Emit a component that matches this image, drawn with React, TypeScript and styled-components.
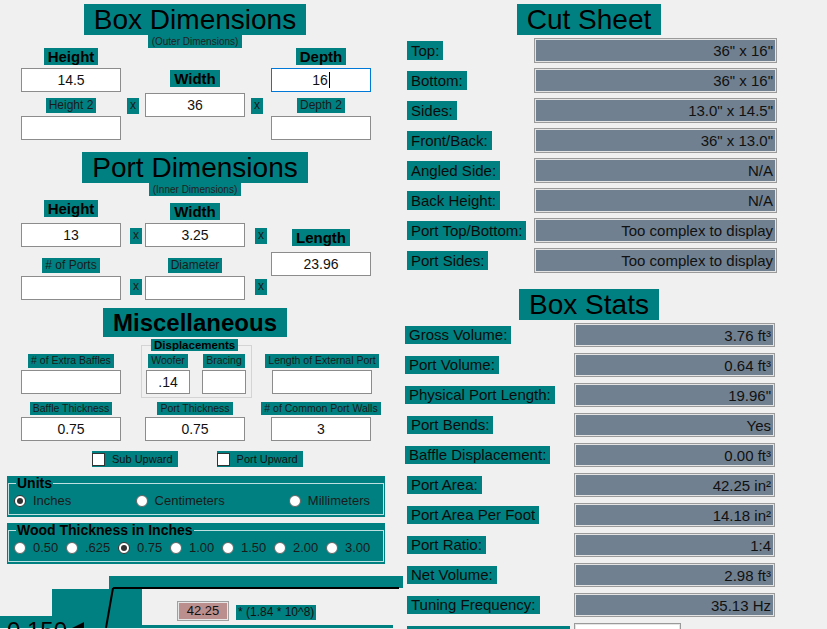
import styled, { createGlobalStyle } from 'styled-components'

const teal = '#008080'
const slate = '#708090'

const GlobalStyle = createGlobalStyle`
  html, body {
    margin: 0;
    padding: 0;
    background: #f0f0f0;
  }
  body {
    font-family: "Liberation Sans", Arial, sans-serif;
    color: #000;
  }
`

const Window = styled.div`
  width: 827px;
  height: 629px;
  overflow: hidden;
  display: flex;
  background: #f0f0f0;
`
const LeftColumn = styled.div`
  width: 390px;
  flex: none;
  display: flex;
  flex-direction: column;
  padding-top: 4px;
`
const RightColumn = styled.div`
  width: 378px;
  flex: none;
  margin-left: 10px;
  display: flex;
  flex-direction: column;
  padding-top: 4px;
`
const Title = styled.div<{ $bold?: boolean; $mt?: number }>`
  align-self: center;
  background: ${teal};
  font-size: ${(p) => (p.$bold ? 24 : 28)}px;
  font-weight: ${(p) => (p.$bold ? 'bold' : 'normal')};
  line-height: ${(p) => (p.$bold ? 29 : 31)}px;
  padding: 0 10px;
  margin-top: ${(p) => p.$mt ?? 0}px;
  white-space: nowrap;
`
const Subtitle = styled.div`
  align-self: center;
  background: ${teal};
  color: #222;
  font-size: 10px;
  line-height: 13px;
  padding: 0 4px;
  white-space: nowrap;
`
const FieldGrid = styled.div<{ $mt?: number }>`
  display: grid;
  grid-template-columns: 100px 24px 100px 26px 100px;
  align-items: start;
  padding-left: 21px;
  margin-top: ${(p) => p.$mt ?? 0}px;
`
const Field = styled.div<{ $mt?: number; $gap?: number }>`
  display: flex;
  flex-direction: column;
  align-items: center;
  width: 100px;
  margin-top: ${(p) => p.$mt ?? 0}px;
  gap: ${(p) => p.$gap ?? 3}px;
`
const Stack = styled.div<{ $gap: number }>`
  display: flex;
  flex-direction: column;
  align-items: center;
  gap: ${(p) => p.$gap}px;
`
const BoldLabel = styled.div`
  background: ${teal};
  font-size: 15px;
  font-weight: bold;
  line-height: 17px;
  padding: 0 4px;
  white-space: nowrap;
`
const SmallLabel = styled.div<{ $size?: number }>`
  background: ${teal};
  color: #1a1a1a;
  font-size: ${(p) => p.$size ?? 12}px;
  line-height: ${(p) => (p.$size ?? 12) + 3}px;
  padding: 0 3px;
  white-space: nowrap;
`
const TextBox = styled.div<{ $width?: number; $focus?: boolean }>`
  box-sizing: border-box;
  width: ${(p) => p.$width ?? 100}px;
  height: 24px;
  background: #fff;
  border: 1px solid ${(p) => (p.$focus ? '#0078d7' : '#8c8c8c')};
  display: flex;
  align-items: center;
  justify-content: center;
  font-size: 14px;
  color: #111;
`
const Caret = styled.span`
  width: 1px;
  height: 16px;
  background: #000;
  margin-left: 1px;
`
const XMark = styled.div<{ $mt: number }>`
  width: 12px;
  height: 16px;
  margin: ${(p) => p.$mt}px 0 0 6px;
  background: ${teal};
  font-size: 12px;
  line-height: 15px;
  text-align: center;
  color: #1a1a1a;
`
const MiscRow = styled.div<{ $mt: number }>`
  display: flex;
  align-items: flex-start;
  padding-left: 21px;
  margin-top: ${(p) => p.$mt}px;
`
const DisplacementFrame = styled.fieldset`
  box-sizing: border-box;
  width: 110px;
  margin: 2px 20px 0;
  padding: 3px 5px 3px 4px;
  border: 1px solid #d4d4d4;
  display: flex;
  gap: 12px;
`
const FrameTitle = styled.legend`
  background: ${teal};
  font-size: 11.5px;
  font-weight: bold;
  line-height: 12px;
  padding: 0 3px;
  margin-left: 5px;
`
const CheckRow = styled.div`
  display: flex;
  gap: 39px;
  padding-left: 92px;
  margin-top: 10px;
`
const CheckItem = styled.div`
  display: flex;
  align-items: center;
  gap: 7px;
  height: 16px;
  background: ${teal};
  padding-right: 5px;
  font-size: 11px;
  color: #111;
`
const CheckSquare = styled.span`
  box-sizing: border-box;
  width: 13px;
  height: 13px;
  background: #fff;
  border: 1px solid #333;
`
const Group = styled.div<{ $mt: number }>`
  box-sizing: border-box;
  width: 378px;
  margin: ${(p) => p.$mt}px 0 0 7px;
  padding: 0 1px 2px;
  background: ${teal};
`
const Frame = styled.fieldset`
  margin: 0;
  min-width: 0;
  padding: 4px 13px 6px 5px;
  border: 1px solid #bfe0e0;
`
const GroupTitle = styled.legend`
  font-size: 14px;
  font-weight: bold;
  line-height: 14px;
  padding: 0 1px;
  margin-left: 2px;
`
const RadioRow = styled.div<{ $spread?: boolean }>`
  display: flex;
  justify-content: ${(p) => (p.$spread ? 'space-between' : 'flex-start')};
  height: 14px;
`
const RadioItem = styled.div<{ $width?: number }>`
  display: flex;
  align-items: center;
  gap: 7px;
  width: ${(p) => (p.$width ? `${p.$width}px` : 'auto')};
  flex: none;
  font-size: 13px;
  line-height: 14px;
  color: #1a1a1a;
`
const RadioDot = styled.span<{ $on?: boolean }>`
  box-sizing: border-box;
  width: 12px;
  height: 12px;
  border-radius: 50%;
  background: #fff;
  border: 1px solid ${(p) => (p.$on ? '#333' : '#666')};
  display: flex;
  align-items: center;
  justify-content: center;
  &::after {
    content: '';
    width: 6px;
    height: 6px;
    border-radius: 50%;
    background: ${(p) => (p.$on ? '#333' : 'transparent')};
  }
`
const Diagram = styled.div`
  position: relative;
  width: 410px;
  height: 64px;
  flex: none;
`
const DiagramArt = styled.svg`
  display: block;
`
const BigReading = styled.span`
  position: absolute;
  left: 7px;
  top: 55px;
  font-size: 24px;
  line-height: 24px;
`
const AreaBox = styled.div`
  position: absolute;
  left: 177px;
  top: 37px;
  box-sizing: border-box;
  width: 52px;
  height: 20px;
  background: #bc8f8f;
  border: 1px solid #a0a0a0;
  box-shadow: inset 0 0 0 1px #e6e6e6;
  font-size: 13px;
  line-height: 18px;
  text-align: center;
  color: #111;
`
const Formula = styled.div`
  position: absolute;
  left: 236px;
  top: 41px;
  background: ${teal};
  font-size: 12px;
  line-height: 15px;
  padding: 0 2px;
  color: #111;
`
const Sheet = styled.div<{ $mt: number; $gap: number }>`
  display: flex;
  flex-direction: column;
  gap: ${(p) => p.$gap}px;
  margin-top: ${(p) => p.$mt}px;
`
const SheetRow = styled.div<{ $label: number; $box: number; $h: number }>`
  display: grid;
  grid-template-columns: ${(p) => p.$label}px ${(p) => p.$box}px;
  align-items: center;
  height: ${(p) => p.$h}px;
  padding-left: 7px;
`
const RowLabel = styled.div<{ $h: number; $shift?: boolean; $width?: number }>`
  justify-self: start;
  background: ${teal};
  font-size: 15px;
  line-height: ${(p) => p.$h}px;
  height: ${(p) => p.$h}px;
  padding: 0 4px;
  margin-left: ${(p) => (p.$shift ? -2 : 0)}px;
  width: ${(p) => (p.$width ? `${p.$width}px` : 'auto')};
  box-sizing: border-box;
  white-space: nowrap;
  color: #0a0a0a;
`
const ValueBox = styled.div<{ $blank?: boolean; $width?: number }>`
  box-sizing: border-box;
  height: 100%;
  width: ${(p) => (p.$width ? `${p.$width}px` : 'auto')};
  background: ${(p) => (p.$blank ? '#fff' : slate)};
  border: 1px solid #9a9a9a;
  box-shadow: inset 0 0 0 1px #e4e4e4;
  display: flex;
  align-items: center;
  justify-content: flex-end;
  padding-right: 3px;
  font-size: 15px;
  color: #111;
  white-space: nowrap;
`

const cutSheet = [
  ['Top:', '36" x 16"'],
  ['Bottom:', '36" x 16"'],
  ['Sides:', '13.0" x 14.5"'],
  ['Front/Back:', '36" x 13.0"'],
  ['Angled Side:', 'N/A'],
  ['Back Height:', 'N/A'],
  ['Port Top/Bottom:', 'Too complex to display'],
  ['Port Sides:', 'Too complex to display'],
]

const boxStats: [string, string, boolean][] = [
  ['Gross Volume:', '3.76 ft³', true],
  ['Port Volume:', '0.64 ft³', true],
  ['Physical Port Length:', '19.96"', true],
  ['Port Bends:', 'Yes', false],
  ['Baffle Displacement:', '0.00 ft³', true],
  ['Port Area:', '42.25 in²', false],
  ['Port Area Per Foot', '14.18 in²', false],
  ['Port Ratio:', '1:4', false],
  ['Net Volume:', '2.98 ft³', false],
  ['Tuning Frequency:', '35.13 Hz', false],
]

const woodSizes = ['0.50', '.625', '0.75', '1.00', '1.50', '2.00', '3.00']

export default function App() {
  return (
    <>
      <GlobalStyle />
      <Window>
        <LeftColumn>
          <Title>Box Dimensions</Title>
          <Subtitle>(Outer Dimensions)</Subtitle>
          <FieldGrid>
            <Field>
              <BoldLabel>Height</BoldLabel>
              <Stack $gap={6}>
                <TextBox>14.5</TextBox>
                <Stack $gap={3}>
                  <SmallLabel>Height 2</SmallLabel>
                  <TextBox />
                </Stack>
              </Stack>
            </Field>
            <XMark $mt={50}>x</XMark>
            <Field $mt={22} $gap={6}>
              <BoldLabel>Width</BoldLabel>
              <TextBox>36</TextBox>
            </Field>
            <XMark $mt={50}>x</XMark>
            <Field>
              <BoldLabel>Depth</BoldLabel>
              <Stack $gap={6}>
                <TextBox $focus>
                  16
                  <Caret />
                </TextBox>
                <Stack $gap={3}>
                  <SmallLabel>Depth 2</SmallLabel>
                  <TextBox />
                </Stack>
              </Stack>
            </Field>
          </FieldGrid>

          <Title $mt={12}>Port Dimensions</Title>
          <Subtitle>(Inner Dimensions)</Subtitle>
          <FieldGrid>
            <Field $mt={4} $gap={6}>
              <BoldLabel>Height</BoldLabel>
              <Stack $gap={11}>
                <TextBox>13</TextBox>
                <Stack $gap={3}>
                  <SmallLabel># of Ports</SmallLabel>
                  <TextBox />
                </Stack>
              </Stack>
            </Field>
            <Stack $gap={35}>
              <XMark $mt={32}>x</XMark>
              <XMark $mt={0}>x</XMark>
            </Stack>
            <Field $mt={7}>
              <BoldLabel>Width</BoldLabel>
              <Stack $gap={11}>
                <TextBox>3.25</TextBox>
                <Stack $gap={3}>
                  <SmallLabel>Diameter</SmallLabel>
                  <TextBox />
                </Stack>
              </Stack>
            </Field>
            <Stack $gap={35}>
              <XMark $mt={32}>x</XMark>
              <XMark $mt={0}>x</XMark>
            </Stack>
            <Field $mt={33} $gap={6}>
              <BoldLabel>Length</BoldLabel>
              <TextBox>23.96</TextBox>
            </Field>
          </FieldGrid>

          <Title $bold $mt={8}>
            Miscellaneous
          </Title>
          <MiscRow $mt={0}>
            <Field $mt={17} $gap={2}>
              <SmallLabel $size={10.5}># of Extra Baffles</SmallLabel>
              <TextBox />
            </Field>
            <DisplacementFrame>
              <FrameTitle>Displacements</FrameTitle>
              <Stack $gap={2}>
                <SmallLabel $size={10.5}>Woofer</SmallLabel>
                <TextBox $width={44}>.14</TextBox>
              </Stack>
              <Stack $gap={2}>
                <SmallLabel $size={10.5}>Bracing</SmallLabel>
                <TextBox $width={44} />
              </Stack>
            </DisplacementFrame>
            <Field $mt={17} $gap={2}>
              <SmallLabel $size={10.5}>Length of External Port</SmallLabel>
              <TextBox />
            </Field>
          </MiscRow>
          <FieldGrid $mt={4}>
            <Field $gap={2}>
              <SmallLabel $size={10.5}>Baffle Thickness</SmallLabel>
              <TextBox>0.75</TextBox>
            </Field>
            <span />
            <Field $gap={2}>
              <SmallLabel $size={10.5}>Port Thickness</SmallLabel>
              <TextBox>0.75</TextBox>
            </Field>
            <span />
            <Field $gap={2}>
              <SmallLabel $size={10.5}># of Common Port Walls</SmallLabel>
              <TextBox>3</TextBox>
            </Field>
          </FieldGrid>
          <CheckRow>
            <CheckItem>
              <CheckSquare />
              Sub Upward
            </CheckItem>
            <CheckItem>
              <CheckSquare />
              Port Upward
            </CheckItem>
          </CheckRow>

          <Group $mt={9}>
            <Frame>
              <GroupTitle>Units</GroupTitle>
              <RadioRow $spread>
                <RadioItem>
                  <RadioDot $on />
                  Inches
                </RadioItem>
                <RadioItem>
                  <RadioDot />
                  Centimeters
                </RadioItem>
                <RadioItem>
                  <RadioDot />
                  Millimeters
                </RadioItem>
              </RadioRow>
            </Frame>
          </Group>
          <Group $mt={6}>
            <Frame>
              <GroupTitle>Wood Thickness in Inches</GroupTitle>
              <RadioRow>
                {woodSizes.map((size) => (
                  <RadioItem key={size} $width={52}>
                    <RadioDot $on={size === '0.75'} />
                    {size}
                  </RadioItem>
                ))}
              </RadioRow>
            </Frame>
          </Group>

          <Diagram>
            <DiagramArt width="410" height="64" viewBox="0 0 410 64">
              <rect x="109" y="12" width="294" height="12" fill={teal} />
              <polygon
                points="109,23 142,23 142,64 0,64 0,52 52,52 52,25 109,25"
                fill={teal}
              />
              <rect x="142" y="61" width="251" height="3" fill={teal} />
              <line x1="113" y1="24" x2="399" y2="24" stroke="#000" strokeWidth="2" />
              <line x1="113" y1="24" x2="106" y2="64" stroke="#000" strokeWidth="2" />
              <polygon points="72,64 84,58 84,64" fill="#000" />
            </DiagramArt>
            <BigReading>0.150</BigReading>
            <AreaBox>42.25</AreaBox>
            <Formula>* (1.84 * 10^8)</Formula>
          </Diagram>
        </LeftColumn>

        <RightColumn>
          <Title>Cut Sheet</Title>
          <Sheet $mt={3} $gap={5}>
            {cutSheet.map(([label, value]) => (
              <SheetRow key={label} $label={127} $box={243} $h={25}>
                <RowLabel $h={19}>{label}</RowLabel>
                <ValueBox>{value}</ValueBox>
              </SheetRow>
            ))}
          </Sheet>

          <Title $mt={16}>Box Stats</Title>
          <Sheet $mt={3} $gap={6}>
            {boxStats.map(([label, value, shift]) => (
              <SheetRow key={label} $label={167} $box={201} $h={24}>
                <RowLabel $h={18} $shift={shift}>
                  {label}
                </RowLabel>
                <ValueBox>{value}</ValueBox>
              </SheetRow>
            ))}
            <SheetRow $label={167} $box={201} $h={24}>
              <RowLabel $h={18} $width={163} />
              <ValueBox $blank $width={107} />
            </SheetRow>
          </Sheet>
        </RightColumn>
      </Window>
    </>
  )
}
